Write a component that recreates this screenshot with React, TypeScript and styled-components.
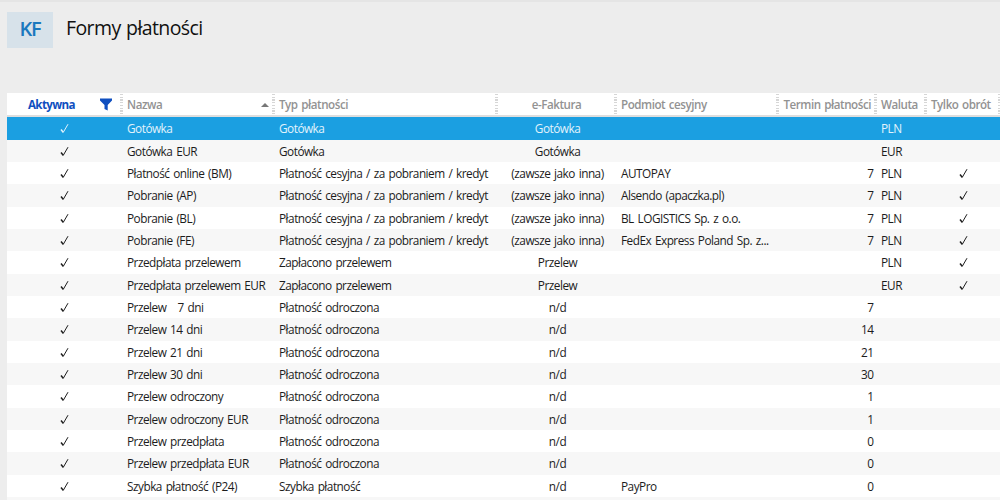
import styled, { createGlobalStyle, css } from "styled-components";

const GlobalStyle = createGlobalStyle`
  * {
    box-sizing: border-box;
  }

  body {
    margin: 0;
    background: #ededed;
    font-family: "Open Sans", "Noto Sans", sans-serif;
    overflow: hidden;
  }
`;

const Page = styled.div`
  height: 500px;
  padding-left: 7px;
  display: flex;
  flex-direction: column;
  border-top: 2px solid #e5e5e5;
  overflow: hidden;
`;

const Header = styled.header`
  flex: none;
  height: 91px;
  padding-top: 10px;
  display: flex;
  align-items: flex-start;
  gap: 13px;
`;

const Badge = styled.div`
  width: 46px;
  height: 36px;
  line-height: 34px;
  text-align: center;
  font-size: 20px;
  font-weight: 600;
  letter-spacing: -1.2px;
  color: #1a78be;
  background: #d7e2ea;
`;

const Title = styled.h1`
  margin: 0;
  font-size: 19.5px;
  font-weight: 400;
  line-height: 31px;
  letter-spacing: -0.6px;
  word-spacing: 1px;
  color: #111;
`;

const columns = css`
  display: grid;
  grid-template-columns: 115px 152px 223px 119px 162px 98px 50px 74px;
`;

const Table = styled.div`
  flex: 1;
  background: #fff;
`;

const HeadRow = styled.div`
  ${columns}
  height: 24px;
  border-bottom: 2px solid #dedede;
  margin-bottom: 0.3px;
`;

const HeadCell = styled.div<{ $align?: string; $active?: boolean }>`
  position: relative;
  display: flex;
  align-items: center;
  justify-content: ${({ $align }) => $align || "flex-start"};
  padding: 1px 5px 0;
  font-size: 11.6px;
  font-weight: ${({ $active }) => ($active ? 700 : 600)};
  letter-spacing: ${({ $active }) => ($active ? -0.65 : -0.45)}px;
  word-spacing: 1px;
  white-space: nowrap;
  color: ${({ $active }) => ($active ? "#0f4fc0" : "#929292")};

  /* dotted resize grip on the column edge */
  &::after {
    content: "";
    position: absolute;
    top: 1px;
    right: -1px;
    width: 3px;
    height: 20px;
    background: repeating-linear-gradient(#d6d6d6 0 1.3px, #fff 1.3px 2.7px);
  }
`;

const ActiveLabel = styled.span`
  padding-left: 16px;
  flex: 1;
`;

const FilterIcon = styled.svg`
  width: 12px;
  height: 13px;
  margin-right: 5px;
`;

const SortArrow = styled.span`
  margin-left: auto;
  border: 4px solid transparent;
  border-top: 0;
  border-bottom: 4px solid #777;
`;

const Row = styled.div<{ $selected?: boolean }>`
  ${columns}
  height: 22.34px;
  line-height: 23.2px;
  font-size: 11.8px;
  letter-spacing: -0.5px;
  word-spacing: 1.2px;
  color: #1c1c1c;

  &:nth-child(odd) {
    background: #f7f7f7;
  }

  ${({ $selected }) =>
    $selected &&
    css`
      color: #e2f3fc;
      background: #1b9fe1;
    `}
`;

const Cell = styled.div<{ $align?: string }>`
  padding: 0 ${({ $align }) => ($align === "right" ? 2.5 : $align === "center" ? 3 : 5)}px 0 5px;
  text-align: ${({ $align }) => $align || "left"};
  white-space: pre;
  overflow: hidden;
`;

const CheckCell = styled(Cell)`
  display: flex;
  align-items: center;
  justify-content: center;
  padding-top: 1px;
`;

const CheckSvg = styled.svg`
  width: 9px;
  height: 11px;
`;

function Check() {
  return (
    <CheckSvg viewBox="0 0 9 11" fill="none" stroke="currentColor">
      <path d="M1 6.6 L3.2 9.2" strokeWidth="1.5" />
      <path d="M3.1 9.6 L8 1.2" strokeWidth="1" />
    </CheckSvg>
  );
}

type Payment = [
  name: string,
  type: string,
  invoice: string,
  entity?: string,
  term?: string,
  currency?: string,
  turnover?: boolean
];

const CESSION = "Płatność cesyjna / za pobraniem / kredyt";
const OTHER = "(zawsze jako inna)";
const DEFERRED = "Płatność odroczona";

const payments: Payment[] = [
  ["Gotówka", "Gotówka", "Gotówka", "", "", "PLN"],
  ["Gotówka EUR", "Gotówka", "Gotówka", "", "", "EUR"],
  ["Płatność online (BM)", CESSION, OTHER, "AUTOPAY", "7", "PLN", true],
  ["Pobranie (AP)", CESSION, OTHER, "Alsendo (apaczka.pl)", "7", "PLN", true],
  ["Pobranie (BL)", CESSION, OTHER, "BL LOGISTICS Sp. z o.o.", "7", "PLN", true],
  ["Pobranie (FE)", CESSION, OTHER, "FedEx Express Poland Sp. z...", "7", "PLN", true],
  ["Przedpłata przelewem", "Zapłacono przelewem", "Przelew", "", "", "PLN", true],
  ["Przedpłata przelewem EUR", "Zapłacono przelewem", "Przelew", "", "", "EUR", true],
  ["Przelew   7 dni", DEFERRED, "n/d", "", "7"],
  ["Przelew 14 dni", DEFERRED, "n/d", "", "14"],
  ["Przelew 21 dni", DEFERRED, "n/d", "", "21"],
  ["Przelew 30 dni", DEFERRED, "n/d", "", "30"],
  ["Przelew odroczony", DEFERRED, "n/d", "", "1"],
  ["Przelew odroczony EUR", DEFERRED, "n/d", "", "1"],
  ["Przelew przedpłata", DEFERRED, "n/d", "", "0"],
  ["Przelew przedpłata EUR", DEFERRED, "n/d", "", "0"],
  ["Szybka płatność (P24)", "Szybka płatność", "n/d", "PayPro", "0"],
  ["", "", ""],
];

export default function App() {
  return (
    <>
      <GlobalStyle />
      <Page>
        <Header>
          <Badge>KF</Badge>
          <Title>Formy płatności</Title>
        </Header>
        <Table>
          <HeadRow>
            <HeadCell $active>
              <ActiveLabel>Aktywna</ActiveLabel>
              <FilterIcon viewBox="0 0 12 13" fill="#0f4fc0">
                <path d="M0 0.500h12v2L7.700 7v5.500L4.500 11V7L0 2.500z" />
              </FilterIcon>
            </HeadCell>
            <HeadCell>
              Nazwa
              <SortArrow />
            </HeadCell>
            <HeadCell>Typ płatności</HeadCell>
            <HeadCell $align="center">e-Faktura</HeadCell>
            <HeadCell>Podmiot cesyjny</HeadCell>
            <HeadCell $align="flex-end">Termin płatności</HeadCell>
            <HeadCell>Waluta</HeadCell>
            <HeadCell>Tylko obrót</HeadCell>
          </HeadRow>
          {payments.map(([name, type, invoice, entity, term, currency, turnover], i) => (
            <Row key={i} $selected={i === 0}>
              <CheckCell>{name && <Check />}</CheckCell>
              <Cell>{name}</Cell>
              <Cell>{type}</Cell>
              <Cell $align="center">{invoice}</Cell>
              <Cell>{entity}</Cell>
              <Cell $align="right">{term}</Cell>
              <Cell>{currency}</Cell>
              <CheckCell>{turnover && <Check />}</CheckCell>
            </Row>
          ))}
        </Table>
      </Page>
    </>
  );
}
